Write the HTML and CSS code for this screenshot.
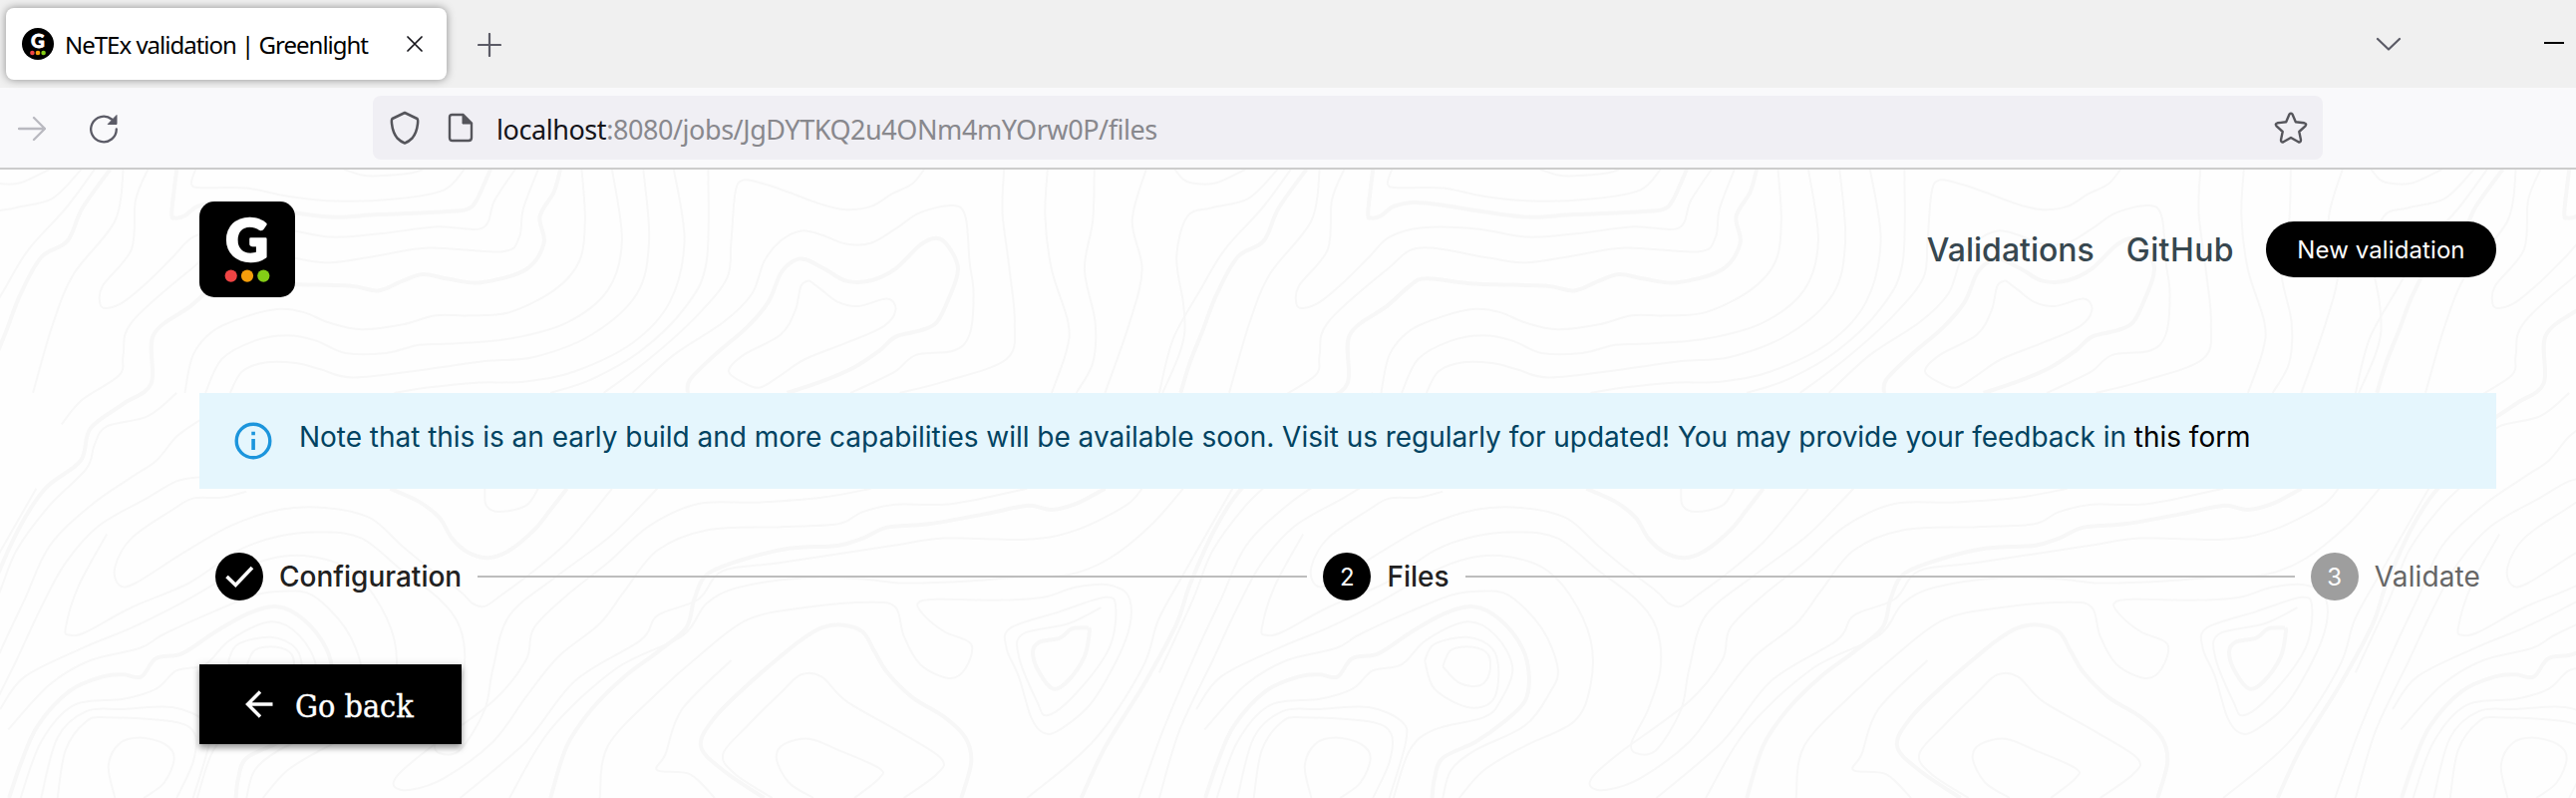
FILE: index.html
```html
<!DOCTYPE html>
<html lang="en">
<head>
<meta charset="utf-8">
<title>NeTEx validation | Greenlight</title>
<link rel="stylesheet" href="styles.css">
</head>
<body>
<div class="tabbar">
  <div class="tab">
    <svg class="favicon" width="32" height="32" viewBox="0 0 32 32"><circle cx="16" cy="16" r="16" fill="#000"/><text x="16" y="20" class="mark mark-small">G</text><circle cx="10.4" cy="25" r="2.3" fill="#ef4444"/><circle cx="16" cy="25" r="2.3" fill="#f59e0b"/><circle cx="21.6" cy="25" r="2.3" fill="#84cc16"/></svg>
    <span class="tab-title">NeTEx validation | Greenlight</span>
    <svg class="tab-close" width="16" height="16" viewBox="0 0 16 16"><path d="M1 1l14 14M15 1L1 15" stroke="#15141a" stroke-width="1.7" stroke-linecap="round"/></svg>
  </div>
  <svg class="tab-new" width="24" height="24" viewBox="0 0 24 24"><path d="M12 1v22M1 12h22" stroke="#5b5b66" stroke-width="2.2" stroke-linecap="round"/></svg>
  <svg class="tab-list" width="26" height="14" viewBox="0 0 26 14"><path d="M2 2l11 10.500L24 2" fill="none" stroke="#5b5b66" stroke-width="2.2" stroke-linecap="round" stroke-linejoin="round"/></svg>
  <svg class="minimize" width="20" height="2" viewBox="0 0 20 2"><path d="M0 0h20v2H0z" fill="#000"/></svg>
</div>
<div class="toolbar">
  <svg class="forward" width="28" height="26" viewBox="0 0 28 26"><path d="M1 13h26M16 2l11 11-11 11" fill="none" stroke="#b9b9c0" stroke-width="2.300" stroke-linecap="round" stroke-linejoin="round"/></svg>
  <svg class="reload" width="28" height="30" viewBox="0 0 28 30"><path d="M22 5.500A12.800 12.800 0 1 0 26.800 15.500" fill="none" stroke="#5b5b66" stroke-width="2.300" stroke-linecap="round"/><path d="M27 1.500v9h-8.800z" fill="#5b5b66" stroke="#5b5b66" stroke-linejoin="round"/></svg>
  <div class="urlbar">
    <svg class="shield" width="30" height="34" viewBox="0 0 30 34"><path d="M15 2L27.500 8Q28.500 9 28 13Q27 22 22.500 27.500Q19 31 15 32.500Q11 31 7.500 27.500Q3 22 2 13Q1.500 9 2.500 8Z" fill="none" stroke="#55555b" stroke-width="2.500" stroke-linejoin="round"/></svg>
    <svg class="doc" width="26" height="30" viewBox="0 0 26 30"><path d="M4.500 2h11L24 10.500V25q0 3-3 3H5q-3 0-3-3V4.500Q2 2 4.500 2z" fill="none" stroke="#55555b" stroke-width="2.400"/><path d="M15 2v9h9z" fill="#55555b" stroke="#55555b" stroke-linejoin="round"/></svg>
    <span class="url"><span class="host">localhost</span>:8080/jobs/JgDYTKQ2u4ONm4mYOrw0P/files</span>
    <svg class="star" width="34" height="32" viewBox="0 0 34 32"><path d="M15.500 2.500Q17 .7 18.500 2.500L21.800 10.300L30.500 11.300Q33.200 12 31.500 14.300L25.300 20L27 28.300Q27 31 24.500 30.300L17 26L9.500 30.300Q7 31 7 28.300L8.700 20L2.500 14.300Q.8 12 3.500 11.300L12.200 10.300Z" fill="none" stroke="#55555b" stroke-width="2.400" stroke-linejoin="round"/></svg>
  </div>
</div>
<div class="page">
  <svg class="contours" width="2584" height="630" viewBox="0 170 2584 630" aria-hidden="true"><defs><g id="tile"></g></defs><use href="#tile" x="-1200"/><use href="#tile"/><use href="#tile" x="1200"/><use href="#tile" x="2400"/></svg>
  <header class="header">
    <svg class="logo" width="96" height="96" viewBox="0 0 96 96"><rect width="96" height="96" rx="15" fill="#000"/><text x="47.500" y="60" class="mark mark-large">G</text><circle cx="31.700" cy="74.600" r="6.100" fill="#ef4444"/><circle cx="48" cy="74.600" r="6.100" fill="#f59e0b"/><circle cx="64.300" cy="74.600" r="6.100" fill="#84cc16"/></svg>
    <nav class="nav"><a class="nav-link validations">Validations</a><a class="nav-link github">GitHub</a><a class="pill"><span>New validation</span></a></nav>
  </header>
  <div class="alert">
    <svg class="info" width="38" height="38" viewBox="0 0 38 38"><circle cx="19" cy="19" r="16.800" fill="none" stroke="#1c95dc" stroke-width="3.400"/><path d="M17.300 9.700h3.600v3.600h-3.600zM17.300 17h3.600v11h-3.600z" fill="#1c95dc"/></svg>
    <p class="alert-text">Note that this is an early build and more capabilities will be available soon. Visit us regularly for updated! You may provide your feedback in <a>this form</a></p>
  </div>
  <div class="stepper">
    <div class="step"><span class="dot"><svg width="48" height="48" viewBox="0 0 48 48"><path d="M11.500 24L20.300 32.500L37 15" fill="none" stroke="#fff" stroke-width="3.600"/></svg></span><span class="label config">Configuration</span></div>
    <div class="line"></div>
    <div class="step"><span class="dot">2</span><span class="label files">Files</span></div>
    <div class="line"></div>
    <div class="step pending"><span class="dot">3</span><span class="label validate">Validate</span></div>
  </div>
  <button class="back"><svg width="28" height="28" viewBox="0 0 28 28"><path d="M27.500 14H3M15 1.500L2.500 14L15 26.500" fill="none" stroke="#fff" stroke-width="3.400"/></svg><span class="back-label">Go back</span></button>
</div>
<script src="contours.js"></script>
</body>
</html>
```

FILE: styles.css
```css
body { margin: 0; width: 2584px; height: 800px; overflow: hidden; font-family: Inter, "Liberation Sans", sans-serif; background: #fefefe; }
svg { display: block; flex: none; }
.tabbar { height: 88px; background: #f0f0f0; display: flex; align-items: flex-start; box-sizing: border-box; padding: 8px 12px 0 6px; }
.tab { width: 442px; height: 72px; box-sizing: border-box; padding: 0 24px 0 16px; border-radius: 8px; background: #fff; box-shadow: 0 0 8px rgba(0, 0, 0, .42); display: flex; align-items: center; }
.favicon { margin-bottom: 1px; }
.mark { font-family: Lato, sans-serif; font-weight: 900; fill: #fff; text-anchor: middle; stroke: #fff; stroke-linejoin: round; }
.mark-small { font-size: 19px; stroke-width: .8px; }
.mark-large { font-size: 59px; stroke-width: 2.6px; }
.tab-title { flex: none; margin-left: 11px; width: 343px; font: 24px "Noto Sans", sans-serif; letter-spacing: -1px; white-space: nowrap; color: #000; }
.tab-new { margin: 25px 0 0 31px; }
.tab-list { margin: 29px 0 0 auto; }
.minimize { margin: 34px 0 0 143px; }
.toolbar { height: 80px; background: #f9f9fb; border-bottom: 2px solid #ccc; display: flex; align-items: center; padding-left: 18px; }
.forward { margin-top: 2px; }
.reload { margin-left: 44px; margin-top: 2px; }
.urlbar { margin-left: 256px; width: 1956px; height: 64px; box-sizing: border-box; padding: 0 15px 0 17px; border-radius: 8px; background: #f0eff4; display: flex; align-items: center; }
.doc { margin-left: 28px; }
.url { margin: 2px 0 0 23px; font: 27px "Noto Sans", sans-serif; letter-spacing: -.44px; color: #88888d; white-space: nowrap; }
.host { color: #15141a; }
.star { margin-left: auto; }
.page { position: relative; height: 630px; box-sizing: border-box; padding: 32px 80px 0 200px; background: #fefefe; }
.contours { position: absolute; inset: 0; }
.contours path { fill: none; stroke: #f7f7f7; stroke-width: 2; }
.contours .major { stroke-width: 4; }
.header, .alert, .stepper, .back { position: relative; }
.header { height: 96px; display: flex; align-items: center; justify-content: space-between; }
.nav { display: flex; align-items: center; gap: 32px; }
.nav-link { font-size: 32px; font-weight: 500; color: #37474f; }
.github { letter-spacing: .4px; }
.pill { width: 231px; height: 56px; border-radius: 28px; background: #000; color: #fff; display: flex; align-items: center; justify-content: center; font-size: 24px; letter-spacing: .1px; white-space: nowrap; }
.alert { margin-top: 96px; height: 96px; background: #e5f6fd; display: flex; align-items: flex-start; }
.info { margin: 29px 0 0 35px; }
.alert-text { margin: 24px 0 0 27px; font-size: 28px; line-height: 40px; letter-spacing: -.025px; color: #014361; white-space: nowrap; }
.alert-text a { color: #000; }
.stepper { margin-top: 64px; padding: 0 16px; height: 48px; display: flex; align-items: center; gap: 16px; }
.step { display: flex; align-items: center; gap: 16px; }
.dot { width: 48px; height: 48px; border-radius: 50%; background: #000; color: #fff; display: flex; align-items: center; justify-content: center; font-size: 24px; }
.label { font-size: 28px; font-weight: 500; color: #212121; white-space: nowrap; }
.line { flex: 1; height: 2px; background: #bdbdbd; }
.pending .dot { background: #9e9e9e; }
.pending .label { color: #666; font-weight: 400; letter-spacing: .12px; }
.back { margin-top: 64px; width: 263px; height: 80px; padding: 0 0 0 46px; border: 0; background: #000; color: #fff; display: flex; align-items: center; gap: 22px; box-shadow: 0 4px 6px rgba(0, 0, 0, .35), 0 0 8px rgba(0, 0, 0, .1); font: 32px "Roboto Slab", "DejaVu Serif", serif; font-stretch: condensed; white-space: nowrap; }
.back-label { margin-top: 3px; -webkit-text-stroke: .4px #fff; }
```

FILE: contours.js
```js
// Each contour lists x,y pairs on a 1456-unit wide repeating tile.
const major = [
"134,24 100,120 82,200 50,240 25,330 7,424 -8,500 -19,573",
"682,24 674,80 657,140 662,205 640,270 585,302 545,293 515,282 490,298 460,322 425,310 340,305 280,292 260,310 232,360 187,430 184,550 150,600 110,660 98,740 55,808 23,906 -8,1045 -24,1140 -64,1290 -110,1440 -140,1568",
"215,24 209,130 213,143 225,138 240,115 265,105 300,112 350,128 405,141 460,135 540,128 568,122 580,100 597,24",
"837,573 840,540 870,480 910,410 935,350 950,280 965,250 980,245 1005,270 1030,298 1060,297 1090,268 1120,210 1140,193 1155,215 1166,270 1155,340 1140,400 1120,420 1090,435 1070,470 1040,510 1000,545 958,573",
"1345,808 1310,845 1280,860 1250,850 1200,870 1130,895 1080,903 1050,930 1020,948 960,955 900,985 860,1020 845,1080 835,1150 800,1210 760,1270 720,1350 690,1440 670,1568",
"475,808 510,840 535,880 550,930 570,965 595,978 620,960 650,910 670,860 690,808",
"930,1568 880,1500 853,1440 870,1370 910,1290 950,1220 975,1180 1000,1150 1025,1143 1050,1160 1065,1210 1080,1260 1110,1320 1150,1370 1175,1420 1182,1480 1170,1568",
"1325,1150 1305,1152 1290,1175 1265,1185 1257,1210 1265,1260 1282,1300 1300,1280 1320,1220 1326,1160 1325,1150",
"11,1568 26,1480 46,1390 85,1305 125,1270 150,1265 172,1270 190,1225 222,1213 262,1160 302,1115 338,1098 370,1130 397,1200 405,1270 400,1330 375,1380 340,1430 300,1470 290,1520 287,1568"
];
const minor = [
"-26,24 -15,50 0,59 25,57 60,24",
"1415,573 1435,480 1442,420 1440,350 1432,240 1445,140 1475,118 1520,95 1555,24",
"1222,24 1220,130 1228,260 1235,400 1225,490 1150,545 1095,573",
"1275,24 1272,140 1280,270 1300,400 1298,470 1280,573",
"1332,24 1330,150 1320,270 1333,400 1330,500 1310,573",
"1395,24 1378,150 1390,270 1375,400 1345,573",
"708,24 712,150 705,250 675,320 620,375 570,383 530,383 490,405 440,417 400,400 370,375 340,367 300,385 260,420 235,480 225,573",
"745,24 757,200 740,320 690,400 620,440 550,452 510,455 470,475 420,475 385,445 350,432 310,445 270,490 250,573",
"783,24 790,200 775,330 720,430 650,485 590,495 520,515 430,535 390,515 360,500 325,498 295,520 280,573",
"820,24 833,200 815,350 770,450 700,520 640,545 580,548 520,560 480,573",
"862,24 860,250 835,360 780,470 720,540 670,573",
"1125,24 1110,60 1085,85 1060,115 1030,123 1000,110 960,80 930,60 905,50 895,80 890,200 885,290 850,380 790,490 735,573",
"770,573 820,480 880,400 915,330 930,250 950,200 975,175 1000,185 1030,207 1060,205 1090,170 1120,130 1160,113 1175,140 1180,250 1185,330 1180,430 1160,470 1115,480 1090,520 1060,550 1035,573",
"985,297 1000,320 1020,350 1045,360 1080,342 1090,370 1075,410 1030,450 980,490 950,530 925,560 905,548 887,520 905,480 950,430 968,370 975,310 985,297",
"180,24 165,100 160,220 125,310 122,355 130,365 150,350 180,300 210,240 235,190 275,167 342,170 402,190 462,182 532,165 587,168 602,100 627,24",
"75,650 100,590 145,530 150,480 160,400 232,270 272,217 352,240 402,253 462,235 522,217 612,226 632,190 637,120 655,24",
"238,24 233,60 245,69 300,70 350,90 410,102 480,97 540,75 565,24",
"418,24 440,38 460,40 500,33 515,24",
"150,24 140,150 90,280 65,400 40,573",
"115,24 80,120 35,220 5,320 -28,440 -45,573",
"215,573 180,630 130,655 115,700 105,760 60,850 20,960 -4,1080 -45,1260",
"243,640 215,680 190,740 160,780 110,850 60,950 30,1080 0,1210 -40,1400 -70,1568",
"243,780 215,790 180,830 120,900 80,990 50,1100 20,1230 -20,1400 -45,1568",
"300,815 270,830 235,832 210,860 160,930 140,1000 145,1045 165,1040 220,970 280,900 340,860 395,855 450,880 490,950 520,1000 560,1060 575,1090 590,1097 610,1070 650,1010 690,940 720,870 745,808",
"130,920 95,1050 80,1150 85,1168 105,1160 160,1100 230,1040 290,960 340,925 390,915 440,930 490,1010 535,1080 560,1150 565,1250 550,1350 530,1430 535,1458 560,1450 590,1350 600,1250 620,1120 680,1020 740,930 780,850 800,808",
"0,1350 30,1270 100,1200 160,1150 220,1090 290,1010 330,980 370,973 420,1000 455,1070 480,1180 480,1290 460,1380 400,1440 350,1500 320,1568",
"10,1400 60,1290 110,1230 170,1200 200,1165 260,1110 310,1070 345,1060 380,1070 420,1150 440,1250 430,1310 400,1390 340,1450 310,1500 300,1568",
"25,1568 50,1430 90,1340 150,1325 190,1300 215,1255 250,1240 280,1180 330,1135 365,1170 385,1250 370,1330 350,1370 290,1400 260,1450 240,1568",
"278,1230 290,1190 330,1173 360,1200 368,1260 360,1330 330,1345 290,1300 278,1230",
"300,1245 310,1205 335,1197 355,1215 357,1260 345,1292 320,1285 300,1245",
"70,1568 80,1450 105,1380 130,1370 210,1380 237,1410 235,1480 215,1568",
"50,1568 70,1420 105,1355 150,1350 210,1345 250,1380 255,1430 235,1568",
"140,1568 132,1490 145,1435 170,1420 200,1435 212,1470 200,1530 175,1568",
"590,808 592,850 608,865 640,850 655,808",
"1060,808 1000,830 920,842 850,845 790,900 740,990 690,1070 650,1150 640,1230 600,1330 520,1450 485,1510 480,1540 500,1548 540,1520 600,1430 640,1320 680,1220 730,1140 760,1060 800,960 860,910 950,902 1020,895 1050,865 1090,847 1160,845 1250,808",
"560,1568 640,1430 700,1280 780,1180 800,1120 850,1080 880,1010 950,990 1080,950 1150,930 1250,933 1310,910 1370,850 1390,808",
"620,1568 670,1400 750,1250 830,1170 860,1090 900,1050 980,1027 1050,1030 1100,1040 1180,1035 1240,1025 1300,1020 1350,980 1400,900 1440,808",
"730,1568 740,1440 800,1310 850,1220 910,1130 980,1100 1060,1087 1090,1100 1100,1170 1120,1240 1155,1274 1175,1250 1182,1190 1150,1160 1125,1120 1117,1090 1140,1080 1220,1082 1270,1075 1310,1050 1350,1045 1375,1080 1370,1180 1330,1330 1290,1400 1270,1408 1255,1370 1240,1270 1225,1200 1230,1150 1290,1110 1345,1075 1358,1100 1350,1200 1310,1310 1275,1365 1262,1330 1240,1220 1245,1165 1300,1140 1340,1100",
"940,1568 895,1510 880,1460 910,1390 950,1310 975,1265 1000,1270 1030,1330 1090,1400 1145,1470 1140,1510 1100,1568",
"990,1568 960,1530 945,1470 955,1435 985,1423 1020,1450 1070,1495 1070,1520 1040,1568",
"870,1568 840,1510 800,1500 810,1460 830,1350 890,1230",
"1250,1568 1330,1430 1390,1250 1410,1130 1440,1020 1500,808"
];
const tile = document.getElementById("tile");
function addContour(list, cls) {
  const p = list.split(" ").map(s => {
    const [x, y] = s.split(",").map(Number);
    return [x * 1200 / 1456, 160 + y / 2.45];
  });
  let d = "M" + p[0];
  for (let i = 0; i < p.length - 1; i++) {
    const a = p[i - 1] || p[i], b = p[i], c = p[i + 1], e = p[i + 2] || c;
    d += "C" + [b[0] + (c[0] - a[0]) / 6, b[1] + (c[1] - a[1]) / 6, c[0] - (e[0] - b[0]) / 6, c[1] - (e[1] - b[1]) / 6, c[0], c[1]].map(n => n.toFixed(1));
  }
  const path = document.createElementNS("http://www.w3.org/2000/svg", "path");
  path.setAttribute("d", d);
  path.setAttribute("class", cls);
  tile.appendChild(path);
}
minor.forEach(l => addContour(l, "minor"));
major.forEach(l => addContour(l, "major"));
```
